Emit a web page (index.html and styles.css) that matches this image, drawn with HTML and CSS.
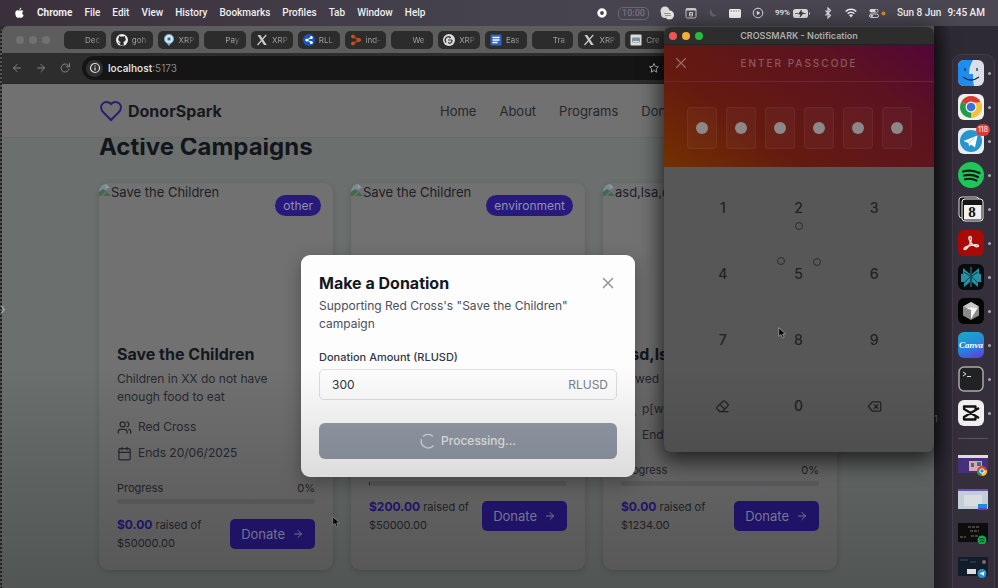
FILE: index.html
```html
<!DOCTYPE html>
<html lang="en">
<head>
<meta charset="utf-8">
<meta name="viewport" content="width=device-width, initial-scale=1">
<title>DonorSpark</title>
<link rel="stylesheet" href="styles.css">
</head>
<body>
<svg class="defs" aria-hidden="true">
  <defs>
    <symbol id="arrow" viewBox="0 0 24 24"><path d="M5 12h14M12 5l7 7-7 7"/></symbol>
    <symbol id="close" viewBox="0 0 24 24"><path d="M18 6L6 18M6 6l12 12"/></symbol>
    <symbol id="users" viewBox="0 0 24 24"><path d="M16 21v-2a4 4 0 0 0-4-4H6a4 4 0 0 0-4 4v2M22 21v-2a4 4 0 0 0-3-3.87M16 3.13a4 4 0 0 1 0 7.75"/><circle cx="9" cy="7" r="4"/></symbol>
    <symbol id="calendar" viewBox="0 0 24 24"><rect x="3" y="4" width="18" height="18" rx="2"/><path d="M16 2v4M8 2v4M3 10h18"/></symbol>
    <symbol id="broken" viewBox="0 0 12 12"><path fill="#7d8a96" d="M0 0h7l2 2v3L0 10z"/><path fill="#8f9ba6" d="M7 0l4 4H7z"/><path fill="#3f6b4c" d="M0 12V8l4-3 3 2-5 5zM4 12l4-4 4 4z"/></symbol>
    <symbol id="cursor" viewBox="0 0 12 16"><path d="M1 1v11.5l3-2.6 2 4.6 2.2-1-2-4.3H10z" fill="#000" stroke="#aaa" stroke-width="1"/></symbol>
    <symbol id="x-logo" viewBox="0 0 24 24"><path d="M3 2h5.500L21.500 22H16z" fill="#ccc"/><path d="M20.500 2l-8 9M3 22l8-9" fill="none" stroke="#ccc" stroke-width="2.400"/></symbol>
  </defs>
</svg>

<div class="desktop">
  <header class="menubar">
    <nav class="menus" aria-label="Menu bar">
      <svg class="apple" viewBox="0 0 24 24"><path fill="#fff" d="M12 6.8C10.800 6.600 9.500 5.800 7.900 5.800 5 5.800 2.800 8.200 2.800 12.300c0 4.700 3 10.200 5.900 10.200 1.200 0 2-.8 3.500-.8s2.200.8 3.500.8c2.300 0 4.300-3.200 5.200-5.800-3.700-1.700-4-6.900-.4-8.800-1.100-1.500-2.700-2.200-4.300-2.100-1.600 0-2.800.9-4.200 1zM15.800.5c.3 2.500-1.700 4.900-4 4.900-.3-2.400 1.800-4.800 4-4.900z"/></svg>
      <b>Chrome</b><span>File</span><span>Edit</span><span>View</span><span>History</span><span>Bookmarks</span><span>Profiles</span><span>Tab</span><span>Window</span><span>Help</span>
    </nav>
    <div class="status">
      <svg class="s10" viewBox="0 0 10 10"><circle cx="5" cy="5" r="3.300" fill="none" stroke="#fff" stroke-width="2.800"/></svg>
      <span class="timer">10:00</span>
      <svg class="s14" viewBox="0 0 14 14"><circle cx="5" cy="5" r="4.500" fill="#ddd"/><circle cx="9.500" cy="9" r="4.500" fill="#eee"/><circle cx="5" cy="8" r="4" fill="#ddd"/><path d="M4 7.500h7M5 9.500h6" stroke="#999" stroke-width="1"/></svg>
      <svg class="s12" viewBox="0 0 12 12"><rect x="1" y="1.500" width="10" height="9.500" rx="1.500" fill="none" stroke="#ccc"/><path d="M1 2.500h10" stroke="#ccc" stroke-width="2"/><path d="M4.500 5.500h3v3.500h-3zM4.500 7.200h3" stroke="#ccc" fill="none"/></svg>
      <svg class="s10" viewBox="0 0 10 10"><path d="M3.500 1a4 4 0 1 0 5.500 5.500A4.500 4.500 0 0 1 3.500 1z" fill="#67626e"/></svg>
      <svg class="s12" viewBox="0 0 12 12"><rect y="2" width="12" height="9" rx="1.500" fill="#f3f3f3"/><path d="M1.500 4h9" stroke="#777" stroke-dasharray="1.500 1"/></svg>
      <svg class="s12" viewBox="0 0 12 12"><circle cx="6" cy="6" r="4.800" fill="none" stroke="#ddd"/><path d="M4.800 3.800L8.300 6 4.800 8.200z" fill="#ddd"/></svg>
      <span class="power">99%<svg class="battery" viewBox="0 0 18 9"><rect x="0" y="0" width="15" height="9" rx="2.500" fill="#ddd"/><path d="M16 3v3q2-1.500 0-3z" fill="#ddd"/><path d="M2 4.500h3M10 4.500h3M8.500 1L5.500 5h2.500l-1 3 3.500-4.200H8z" fill="#333" stroke="#333" stroke-width=".7"/></svg></span>
      <svg class="s12" viewBox="0 0 12 12"><path d="M3.500 3.500l5 5L6 11V1l2.500 2.500-5 5" fill="none" stroke="#ddd" stroke-width="1.200"/></svg>
      <svg class="s12" viewBox="0 0 12 12"><path d="M.7 4.500a7.500 7.500 0 0 1 10.600 0M2.600 6.600a4.800 4.800 0 0 1 6.800 0" fill="none" stroke="#eee" stroke-width="1.500"/><path d="M4 8.300a2.900 2.900 0 0 1 4 0L6 10.400z" fill="#eee"/></svg>
      <svg class="control" viewBox="0 0 18 12"><rect x="1.500" y="2" width="9" height="3.500" rx="1.700" fill="#ddd"/><circle cx="8.500" cy="3.700" r="1.200" fill="#444"/><rect x="1.500" y="7" width="9" height="3.500" rx="1.700" fill="none" stroke="#ddd"/><circle cx="3.800" cy="8.700" r="1.300" fill="#ddd"/><circle cx="15.500" cy="6.500" r="2" fill="#d98a1d"/></svg>
      <span class="clock"><span>Sun 8 Jun</span><span>9:45 AM</span></span>
    </div>
  </header>

  <div class="stage">
    <section class="browser">
      <div class="tabs">
        <div class="lights"><i></i><i></i><i></i></div>
        <div class="tablist">
          <div class="tab"><span class="fav"></span><span>Dec</span></div>
          <div class="tab"><svg class="fav" viewBox="0 0 24 24"><circle cx="12" cy="12" r="12" fill="#eee"/><path d="M8.500 23v-4c-3 .5-3.600-1.500-4.500-2.500 2 0 2.500 1.800 4.500 1.200.1-.9.500-1.400.9-1.800-3-.4-4.900-1.900-4.900-5.200 0-1.500.5-2.500 1.400-3.400-.3-1-.2-2 .2-3.200 1.300 0 2.300.7 3.200 1.300a11 11 0 0 1 5.400 0c.9-.6 1.900-1.300 3.200-1.300.4 1.200.5 2.200.2 3.200.9.900 1.400 1.900 1.400 3.400 0 3.300-1.900 4.800-4.900 5.200.6.500.9 1.400.9 2.600V23z" fill="#2a2a2a"/></svg><span>goh</span></div>
          <div class="tab"><svg class="fav" viewBox="0 0 12 12"><path d="M6 0a5 5 0 0 1 5 5c0 3-3 4-5 7C4 9 1 8 1 5a5 5 0 0 1 5-5z" fill="#7fb0da"/><circle cx="6" cy="5" r="3" fill="none" stroke="#e8f1f8" stroke-width="1.500"/><circle cx="6" cy="5" r="1" fill="#1d4f80"/></svg><span>XRP</span></div>
          <div class="tab"><span class="fav"></span><span>Pay</span></div>
          <div class="tab"><svg class="fav"><use href="#x-logo"/></svg><span>XRP</span></div>
          <div class="tab"><svg class="fav" viewBox="0 0 12 12"><circle cx="6" cy="6" r="6" fill="#1556c4"/><path d="M8.500 3.500L4 6l4.500 2.500" fill="none" stroke="#fff"/><circle cx="8.300" cy="3.600" r="1.500" fill="#fff"/><circle cx="3.800" cy="6" r="1.500" fill="#fff"/><circle cx="8.300" cy="8.400" r="1.500" fill="#fff"/></svg><span>RLL</span></div>
          <div class="tab"><svg class="fav" viewBox="0 0 12 12"><path d="M3 2.500L9 6 3 9.500" fill="none" stroke="#a8441c" stroke-width="1.800"/><circle cx="3" cy="2.500" r="1.900" fill="#c4501f"/><circle cx="9" cy="6" r="2.100" fill="#c4501f"/><circle cx="3" cy="9.500" r="1.900" fill="#c4501f"/></svg><span>ind-</span></div>
          <div class="tab"><span class="fav"></span><span>We</span></div>
          <div class="tab"><svg class="fav" viewBox="0 0 12 12"><circle cx="6" cy="6" r="6" fill="#ddd"/><path d="M3 8.500a3.500 3.500 0 0 1 4-5.500M5 6h4M5 8.500a2.500 2.500 0 0 0 4-2.500M6 4l2-1" fill="none" stroke="#333" stroke-width="1.200"/></svg><span>XRP</span></div>
          <div class="tab"><svg class="fav" viewBox="0 0 12 12"><rect x=".5" y=".5" width="11" height="11" rx="1" fill="#2f62c4"/><path d="M2.500 3.500h7M2.500 6h7M2.500 8.500h5" stroke="#fff" stroke-width="1.300"/></svg><span>Eas</span></div>
          <div class="tab"><span class="fav"></span><span>Tra</span></div>
          <div class="tab"><svg class="fav"><use href="#x-logo"/></svg><span>XRP</span></div>
          <div class="tab"><svg class="fav" viewBox="0 0 12 12"><rect x=".5" y=".5" width="11" height="11" rx="1" fill="#ddd"/><rect x="2" y="3.500" width="8" height="5" rx="1" fill="#7b93a5"/><path d="M3 7.500h6" stroke="#ddd"/></svg><span>Cre</span></div>
        </div>
      </div>
      <div class="toolbar">
        <button class="tool" aria-label="Back"><svg class="line flip"><use href="#arrow"/></svg></button>
        <button class="tool" aria-label="Forward"><svg class="line"><use href="#arrow"/></svg></button>
        <button class="tool" aria-label="Reload"><svg class="line" viewBox="0 0 24 24"><path d="M20 14a8 8 0 1 1-2-7.500l2.500 2.500M21 3v6.500h-6.500"/></svg></button>
        <div class="omnibox">
          <span class="site"><svg viewBox="0 0 12 12"><circle cx="6" cy="6" r="4.500" fill="none" stroke="#ddd" stroke-width="1.200"/><path d="M6 3.500v1M6 5.500V8.500" stroke="#ddd" stroke-width="1.200"/></svg></span>
          <span class="url"><b>localhost</b>:5173</span>
          <svg class="star" viewBox="0 0 24 24"><path d="M12 3l2.700 6 6.300.6-4.800 4.300 1.500 6.500L12 17l-5.700 3.400 1.500-6.500L3 9.600 9.300 9z" fill="none" stroke="#bbb" stroke-width="2"/></svg>
        </div>
      </div>

      <div class="page">
        <header class="site-header">
          <div class="brand"><svg viewBox="0 0 24 24"><path d="M19 14c1.500-1.500 3-3.200 3-5.500A5.500 5.500 0 0 0 16.500 3c-1.800 0-3 .5-4.500 2-1.500-1.500-2.700-2-4.500-2A5.500 5.500 0 0 0 2 8.500c0 2.300 1.500 4 3 5.500l7 7z"/></svg>DonorSpark</div>
          <nav class="links"><a href="#">Home</a><a href="#">About</a><a href="#">Programs</a><a href="#">Donate</a></nav>
        </header>
        <main class="content">
          <h1>Active Campaigns</h1>
          <div class="cards">
            <article class="card">
              <div class="media"><svg><use href="#broken"/></svg><span>Save the Children</span><span class="badge">other</span></div>
              <div class="body">
                <h2>Save the Children</h2>
                <p class="desc">Children in XX do not have enough food to eat</p>
                <p class="meta"><svg class="line"><use href="#users"/></svg>Red Cross</p>
                <p class="meta"><svg class="line"><use href="#calendar"/></svg>Ends 20/06/2025</p>
                <div class="progress"><span>Progress</span><span>0%</span></div>
                <div class="bar"></div>
                <div class="fund"><div><p><b>$0.00</b> raised of</p><p>$50000.00</p></div><button class="donate">Donate <svg class="line"><use href="#arrow"/></svg></button></div>
              </div>
            </article>
            <article class="card">
              <div class="media"><svg><use href="#broken"/></svg><span>Save the Children</span><span class="badge">environment</span></div>
              <div class="body">
                <h2>Save the Children</h2>
                <p class="desc">Save the Children</p>
                <p class="meta"><svg class="line"><use href="#users"/></svg>Red Cross</p>
                <p class="meta"><svg class="line"><use href="#calendar"/></svg>Ends 20/06/2025</p>
                <div class="progress"><span>Progress</span><span>0%</span></div>
                <div class="bar started"></div>
                <div class="fund"><div><p><b>$200.00</b> raised of</p><p>$50000.00</p></div><button class="donate">Donate <svg class="line"><use href="#arrow"/></svg></button></div>
              </div>
            </article>
            <article class="card">
              <div class="media"><svg><use href="#broken"/></svg><span>asd,lsa,d</span></div>
              <div class="body">
                <h2>asd,lsa</h2>
                <p class="desc">qywed</p>
                <p class="meta"><svg class="line"><use href="#users"/></svg>p[wd</p>
                <p class="meta"><svg class="line"><use href="#calendar"/></svg>Ends</p>
                <div class="progress"><span>Progress</span><span>0%</span></div>
                <div class="bar"></div>
                <div class="fund"><div><p><b>$0.00</b> raised of</p><p>$1234.00</p></div><button class="donate">Donate <svg class="line"><use href="#arrow"/></svg></button></div>
              </div>
            </article>
          </div>
        </main>

        <div class="overlay">
          <form class="modal">
            <div class="modal-head"><h2>Make a Donation</h2><button type="button" class="x" aria-label="Close"><svg class="line"><use href="#close"/></svg></button></div>
            <p class="sub">Supporting Red Cross's "Save the Children" campaign</p>
            <label for="amount">Donation Amount (RLUSD)</label>
            <div class="field"><input id="amount" type="text" value="300"><span>RLUSD</span></div>
            <button type="button" class="processing"><svg viewBox="0 0 16 16"><path d="M3 3.500a7 7 0 0 1 10 0M1.500 6a7 7 0 0 0 12 6.500" fill="none" stroke="#d5d8dc" stroke-width="1.400"/></svg>Processing...</button>
          </form>
        </div>
        <svg class="pointer page-pointer"><use href="#cursor"/></svg>
      </div>
    </section>

    <section class="popup">
      <div class="titlebar"><div class="lights"><i></i><i></i><i></i></div>CROSSMARK - Notification</div>
      <div class="hero">
        <div class="hero-head"><button aria-label="Cancel"><svg class="line"><use href="#close"/></svg></button><span>ENTER PASSCODE</span></div>
        <div class="code"><i></i><i></i><i></i><i></i><i></i><i></i></div>
      </div>
      <div class="keys">
        <button>1</button><button>2</button><button>3</button>
        <button>4</button><button>5</button><button>6</button>
        <button>7</button><button>8</button><button>9</button>
        <button aria-label="Clear"><svg class="line" viewBox="0 0 24 24"><path d="M8 20l-5-4.500a2 2 0 0 1 0-2.500L13 3.500a2 2 0 0 1 3 0l4.500 4.500a2 2 0 0 1 0 3L12 20zM8 9l7.500 7M7 20h14"/></svg></button><button>0</button><button aria-label="Delete"><svg class="line" viewBox="0 0 24 24"><path d="M8.500 4.500H20a2 2 0 0 1 2 2v11a2 2 0 0 1-2 2H8.500L2 12zM11.500 9l6 6M17.500 9l-6 6"/></svg></button>
        <svg class="spinner" viewBox="0 0 46 46"><g fill="none" stroke="#2d2d2d"><circle cx="23" cy="5" r="3.500"/><circle cx="5" cy="40" r="3.500"/><circle cx="41" cy="41" r="3.500"/></g></svg>
        <svg class="pointer"><use href="#cursor"/></svg>
      </div>
    </section>

    <div class="gutter"><span>1</span></div>
    <aside class="dock">
      <div class="app"><svg viewBox="0 0 26 26"><rect width="26" height="26" rx="6" fill="#d9dfe8"/><path d="M6 0h9c-3 5-4 9-4 14h4c0 5 0 8 1 12H6a6 6 0 0 1-6-6V6a6 6 0 0 1 6-6z" fill="#1f8cf0"/><path d="M7 8v3M19 8v3M5 17q8 6 16 0" fill="none" stroke="#16324f" stroke-width="1.300"/></svg></div>
      <div class="app"><svg viewBox="0 0 26 26"><rect width="26" height="26" rx="6" fill="#f0f0f0"/><path d="M13 13L3.500 7.500A11 11 0 0 1 22.500 7.500z" fill="#d93a2d"/><path d="M13 13L22.500 7.500A11 11 0 0 1 13 24z" fill="#f5c33b"/><path d="M13 13v11A11 11 0 0 1 3.500 7.500z" fill="#269a4c"/><path d="M13 8.500h9.800a11 11 0 0 1-9.800 15.500l4-9z" fill="#f5c33b"/><circle cx="13" cy="13" r="5.500" fill="#f4f4f4"/><circle cx="13" cy="13" r="4.300" fill="#3474dd"/></svg></div>
      <div class="app"><svg viewBox="0 0 26 26"><rect width="26" height="26" rx="6" fill="#e9eef2"/><circle cx="13" cy="13" r="11" fill="#2596cf"/><path d="M5.500 13L19.500 7.500 17 19.500l-4-3-2 2-.5-3.500z" fill="#fff"/><path d="M10.500 15l6-5" stroke="#9cc9e3"/></svg><span class="count">118</span></div>
      <div class="app"><svg viewBox="0 0 26 26"><circle cx="13" cy="13" r="13" fill="#1fc75a"/><path d="M5 9.500q8.500-2.500 16.500 1.500M6 13.500q7.500-2 14 1.500M7 17.300q6-1.500 11.500 1.200" fill="none" stroke="#101a13" stroke-width="2.200" stroke-linecap="round"/></svg></div>
      <div class="app cal"><svg viewBox="0 0 26 26"><rect x="1" y="1" width="20" height="21" rx="3" fill="#151515" stroke="#ddd"/><rect x="4" y="3" width="21" height="22" rx="3" fill="#151515" stroke="#eee"/><path d="M6 9h17.500v14.500H6z" fill="#f2f2f2"/></svg><b>8</b></div>
      <div class="app"><svg viewBox="0 0 26 26"><rect width="26" height="26" rx="6" fill="#a90a06"/><path d="M12 6.500c2 0 1.500 3.500.5 6-1.300 3.300-4 7-5.700 7-1.500 0-.8-2 2-3 3-1.200 7-2 9.700-1.800 2.500.2 2.500 2 .5 2-3 0-7.500-4.500-8-8-.3-1.500.2-2.200 1-2.200z" fill="none" stroke="#f1dcdc" stroke-width="1.500"/></svg></div>
      <div class="app"><svg viewBox="0 0 26 26"><rect width="26" height="26" rx="6" fill="#070b0d"/><path d="M12 10L5 4v6H3v8h3v5l6-5zM14 10l7-6v6h2v8h-3v5l-6-5z" fill="#2591a5"/><path d="M13 3v20" stroke="#2591a5"/><path d="M12 12L6 8M14 12l6-4M12 13l-6 6M14 13l6 6" stroke="#0b3640"/></svg></div>
      <div class="app"><svg viewBox="0 0 26 26"><rect width="26" height="26" rx="6" fill="#060606"/><path d="M13 4l8 4.500v9L13 22l-8-4.500v-9z" fill="#8a8a8a"/><path d="M5 8.500L13 4l8 4.500-8 1.500z" fill="#c9c9c9"/><path d="M7 9.500h13L13 21v-9z" fill="#f4f4f4"/></svg></div>
      <div class="app canva"><span>Canva</span></div>
      <div class="app"><svg viewBox="0 0 26 26"><rect x="1" y="1" width="24" height="24" rx="5" fill="#202224" stroke="#aaa" stroke-width="1.500"/><path d="M5 6l3 2-3 2M9 10.500h4" fill="none" stroke="#ddd"/></svg></div>
      <div class="app"><svg viewBox="0 0 26 26"><rect width="26" height="26" rx="6" fill="#f0f0f0"/><path d="M21 8L6 17v2.500h11.500V17M21 18L6 9V6.500h11.500V9" fill="none" stroke="#111" stroke-width="2.300" stroke-linejoin="round"/></svg></div>
      <hr>
      <svg class="thumb" viewBox="0 0 30 21"><path fill="#46307a" d="M0 0h30v18H0z"/><path fill="#ddd" d="M0 0h30v3H0z"/><path fill="#d9a6b2" d="M11 6h13v10H11z"/><path d="M13 8h3v4h-3zM19 7h4v4h-4z" fill="#377"/><circle cx="24" cy="16" r="5" fill="#d9432f"/><path d="M24 16l5-1a5 5 0 0 1-5 6z" fill="#f3c33c"/><path d="M24 16v5a5 5 0 0 1-5-6z" fill="#2b9c4e"/><circle cx="24" cy="16" r="2.200" fill="#3a78dd" stroke="#fff"/></svg>
      <svg class="thumb" viewBox="0 0 30 21"><path fill="#c3ced8" d="M0 0h30v20H0z"/><path fill="#6b51b5" d="M0 0h30v2H0z"/><rect x="6" y="6" width="18" height="11" fill="#d9dce0"/><path d="M20 15h9v6h-9z" fill="#1b8ed0"/><path d="M20 19h9v2h-9z" fill="#5b3fd0"/></svg>
      <svg class="thumb" viewBox="0 0 30 21"><path fill="#0c0d0e" d="M0 0h30v19H0z"/><path d="M10 4h12M12 8h9M2 14h6M13 13h8" stroke="#4b4037" stroke-width="2" stroke-dasharray="3 1"/><circle cx="24" cy="17" r="4.500" fill="#14a64a"/><path d="M21.500 16q3-1 5 .5M22 18.500q2-1 4 .3" stroke="#0b331a" fill="none"/></svg>
      <svg class="thumb" viewBox="0 0 30 21"><path fill="#121d2b" d="M0 0h30v19H0z"/><path d="M2 3h8M12 5h6" stroke="#32506a"/><path d="M9 12h9v5H9z" fill="#ddd"/><circle cx="26" cy="5" r="2" fill="#7b6b62"/><circle cx="24" cy="16.500" r="4.500" fill="#2b92c9"/><path d="M21.500 16.500l5-2-1 4.500-1.500-1.500z" fill="#fff"/></svg>
      <svg class="thumb" viewBox="0 0 30 21"><circle cx="13" cy="9" r="10" fill="#a19da6"/></svg>
    </aside>
    <div class="shade"></div>
    <span class="handle">›</span>
  </div>
</div>
</body>
</html>
```
FILE: styles.css
```css
* { box-sizing: border-box; margin: 0; padding: 0; }
body { height: 100vh; overflow: hidden; background: #2e2a33; font-family: Inter, "Open Sans", sans-serif; font-size: 13px; line-height: 18px; color: #1d2026; }
button, input { font: inherit; color: inherit; border: 0; background: none; }
a { color: inherit; text-decoration: none; }
i { display: block; }
.defs { position: absolute; width: 0; height: 0; }
.line { fill: none; stroke: currentColor; stroke-width: 2; stroke-linecap: round; stroke-linejoin: round; }
.desktop { display: flex; flex-direction: column; height: 100vh; }

/* System menu bar */
.menubar { flex: none; height: 26px; display: flex; justify-content: space-between; align-items: center; padding: 0 13px 0 14px; background: linear-gradient(90deg, #3a303c, #46434e 50%, #4a4652); color: #eee; font-family: Roboto, Inter, sans-serif; font-size: 10px; font-weight: 500; }
.menus, .status, .clock, .power { display: flex; align-items: center; }
.menus { gap: 12px; }
.apple { width: 11px; height: 12px; }
.status { gap: 11px; }
.timer { border: 1px solid #6b6672; border-radius: 5px; padding: 0 3px; line-height: 11px; font-size: 9px; color: #77727e; }
.s10 { width: 10px; height: 10px; }
.s12 { width: 12px; height: 12px; }
.s14 { width: 14px; height: 14px; }
.power { gap: 3px; font-size: 8px; }
.battery { width: 18px; height: 9px; }
.control { width: 18px; height: 12px; }
.clock { gap: 6px; white-space: nowrap; }

.stage { position: relative; flex: 1; min-height: 0; display: flex; }

/* Browser window */
.browser { flex: 1; min-width: 0; display: flex; flex-direction: column; border-left: 2px dotted #222; border-radius: 8px 0 0 0; overflow: hidden; background: #555; }
.tabs { flex: none; height: 27px; display: flex; align-items: center; padding: 0 267px 0 14px; background: #5d5d5d; }
.lights { display: flex; gap: 5px; }
.lights i { width: 8px; height: 8px; border-radius: 50%; background: #717171; }
.tablist { flex: 1; min-width: 0; margin-left: 14px; display: grid; grid-template-columns: repeat(13, 1fr); gap: 5px; }
.tab { display: flex; align-items: center; gap: 4px; height: 18px; padding: 0 5px; border-radius: 5px; background: #2c2c2c; font-size: 8px; color: #a0a0a0; }
.tab span:last-child { flex: 1; min-width: 0; mask-image: linear-gradient(90deg, #000 50%, rgba(0, 0, 0, .3)); }
.fav { flex: none; width: 12px; height: 12px; }
.toolbar { flex: none; height: 31px; display: flex; align-items: center; gap: 10px; padding-left: 8px; background: #2d2d2d; border-bottom: 1px solid #262626; }
.tool { width: 14px; height: 14px; color: #858585; }
.tool svg { display: block; width: 12px; height: 12px; margin: 1px; }
.flip { transform: scaleX(-1); }
.omnibox { flex: 1; height: 24px; display: flex; align-items: center; gap: 5px; padding: 0 274px 0 4px; border-radius: 12px; background: #151515; font-size: 10px; color: #8a8a8a; }
.site { width: 17px; height: 17px; display: grid; place-items: center; border-radius: 50%; background: #303030; }
.site svg { width: 12px; height: 12px; }
.url { flex: 1; }
.url b { font-weight: 600; color: #ddd; }
.star { width: 12px; height: 12px; }

/* Page */
.page { position: relative; flex: 1; min-height: 0; overflow: hidden; background: #6b706e; }
.site-header { position: relative; z-index: 1; height: 54px; display: grid; grid-template-columns: 341px auto; align-items: center; padding: 0 97px; background: #717171; border-bottom: 1px solid #696969; }
.brand { display: flex; align-items: center; gap: 5px; font-size: 16px; font-weight: 700; color: #17191f; }
.brand svg { width: 24px; height: 24px; fill: none; stroke: #2c1c73; stroke-width: 2; }
.links { display: flex; gap: 23px; color: #24272c; }
.content { padding: 0 97px; }
h1 { font-size: 24px; line-height: 18px; color: #12161c; margin-bottom: 27px; }
.cards { display: grid; grid-template-columns: repeat(3, 1fr); gap: 18px; }
.card { border-radius: 9px; background: #717171; box-shadow: 0 2px 6px rgba(0, 0, 0, .16); overflow: hidden; }
.media { position: relative; height: 142px; display: flex; }
.media svg { width: 12px; height: 12px; margin-top: 1px; }
.badge { position: absolute; top: 12px; right: 12px; padding: 0 8px; line-height: 21px; border-radius: 11px; background: #281a7c; color: #918ebd; font-size: 12px; }
.body { padding: 16px 18px 18px; }
.body h2 { font-size: 16px; line-height: 26px; margin-bottom: 3px; color: #14171c; }
.desc, .meta { font-size: 12px; color: #262a30; }
.desc { margin-bottom: 12px; padding-right: 24px; }
.meta { display: flex; align-items: center; gap: 6px; margin-bottom: 8px; }
.meta svg { width: 15px; height: 15px; }
.progress { display: flex; justify-content: space-between; margin-top: 16px; font-size: 11px; line-height: 20px; color: #24272c; }
.bar { height: 5px; margin: 1px 0 12px; border-radius: 3px; background: #646668; }
.started { background: linear-gradient(90deg, #281a7c 1px, #646668 1px); }
.fund { display: flex; justify-content: space-between; align-items: center; }
.fund p { font-size: 11px; color: #24272c; white-space: nowrap; }
.fund b { font-size: 12px; color: #25177c; }
.donate { flex: none; display: flex; align-items: center; gap: 7px; height: 30px; padding: 0 11px; border-radius: 5px; background: #25177c; color: #908dae; }
.donate svg { width: 12px; height: 12px; }

/* Donation dialog */
.overlay { position: absolute; z-index: 2; inset: 0; padding-top: 171px; display: flex; justify-content: center; align-items: flex-start; }
.modal { width: 100%; max-width: 334px; padding: 18px; border-radius: 9px; background: #fdfdfd; box-shadow: 0 6px 18px rgba(0, 0, 0, .3); display: flex; flex-direction: column; }
.modal-head { display: flex; justify-content: space-between; align-items: center; margin-bottom: 4px; }
.modal h2 { font-size: 16px; line-height: 20px; color: #14171f; }
.x { width: 18px; height: 18px; color: #909399; }
.x svg { display: block; width: 18px; height: 18px; }
.sub { font-size: 12px; color: #4b5059; margin-bottom: 15px; }
.modal label { font-size: 11px; font-weight: 500; color: #333844; margin-bottom: 3px; }
.field { display: flex; align-items: center; height: 31px; border: 1px solid #ddd; border-radius: 5px; padding: 0 8px 0 12px; color: #7a7f88; font-size: 12px; }
.field input { flex: 1; min-width: 0; color: #30343b; outline: 0; }
.processing { display: flex; align-items: center; justify-content: center; gap: 5px; height: 36px; margin-top: 23px; border-radius: 6px; background: #949ba7; color: #e6e8eb; font-size: 12px; font-weight: 500; }
.processing svg { width: 16px; height: 16px; }
.pointer { width: 9px; height: 12px; }
.page-pointer { position: absolute; left: 330px; top: 432px; z-index: 3; }

/* Wallet window floating above the browser */
.popup { position: absolute; top: 1px; right: 64px; z-index: 4; width: 270px; display: flex; flex-direction: column; border-radius: 7px; overflow: hidden; background: #575757; box-shadow: 0 6px 22px 3px rgba(0, 0, 0, .7); }
.titlebar { position: relative; height: 18px; line-height: 18px; text-align: center; background: #2d2d2d; border-bottom: 1px solid #222; color: #aaa; font-size: 9px; font-weight: 600; }
.titlebar .lights { position: absolute; left: 5px; top: 5px; }
.titlebar i:nth-child(1) { background: #f0564f; }
.titlebar i:nth-child(2) { background: #f3af33; }
.titlebar i:nth-child(3) { background: #2bba3d; }
.hero { height: 122px; background: linear-gradient(35deg, #743000 0%, #651a10 32%, #5c1320 72%, #540538 100%); }
.hero-head { display: grid; grid-template-columns: 34px 1fr 34px; align-items: center; height: 37px; border-bottom: 1px solid #702331; color: #8f5960; font-size: 10px; font-weight: 500; letter-spacing: 2px; text-align: center; }
.hero-head svg { display: block; width: 18px; height: 18px; margin: auto; color: #986c6c; stroke-width: 1.5; }
.code { display: flex; justify-content: center; gap: 9px; padding-top: 25px; }
.code i { display: grid; place-items: center; width: 30px; height: 42px; border-radius: 4px; border: 1px solid rgba(255, 255, 255, .05); background: rgba(255, 255, 255, .03); }
.code i::after { content: ""; width: 12px; height: 12px; border-radius: 50%; background: #8d8888; }
.keys { position: relative; display: grid; grid-template-columns: repeat(3, 1fr); grid-auto-rows: 66px; padding: 8px 22px 13px 21px; font-size: 14px; font-weight: 500; color: #222; }
.keys .line { width: 15px; height: 15px; }
.keys button { display: grid; place-items: center; }
.spinner { position: absolute; left: 112px; top: 54px; width: 46px; height: 46px; }
.keys .pointer { position: absolute; left: 114px; top: 160px; }

/* Dock */
.gutter { position: relative; flex: none; width: 18px; background: linear-gradient(90deg, #211e25, #302b36); color: #777; font-size: 9px; }
.gutter span { position: absolute; left: 0; top: 384px; }
.dock { flex: none; width: 43px; margin: 28px 3px 0 0; padding: 5px 0 0 5px; display: flex; flex-direction: column; gap: 8px; border: 1px solid #423b49; border-bottom: 0; border-radius: 9px 9px 0 0; background: #352e3b; overflow: hidden; }
.app { position: relative; flex: none; width: 26px; height: 26px; }
.app svg { display: block; width: 26px; height: 26px; }
.app::after { content: ""; position: absolute; right: -7px; top: 12px; width: 3px; height: 3px; border-radius: 50%; background: #aaa6ad; }
.count { position: absolute; right: -6px; top: -4px; width: 14px; height: 12px; border-radius: 6px; background: #dd3b35; color: #fff; font-size: 7px; line-height: 12px; text-align: center; }
.cal b { position: absolute; left: 5px; top: 8px; width: 18px; text-align: center; color: #111; font-family: "Liberation Serif", serif; font-size: 15px; line-height: 16px; }
.canva { display: grid; place-items: center; border-radius: 6px; background: linear-gradient(160deg, #15b0c4, #2a7de0 60%, #6a35dc); color: #fff; font-family: "Liberation Serif", serif; font-style: italic; font-size: 9px; font-weight: 700; }
.dock hr { flex: none; width: 30px; border: 0; border-top: 1px solid #5a5460; margin: 4px 0 8px; }
.thumb { flex: none; width: 30px; height: 21px; margin-bottom: 5px; }

.shade { position: absolute; z-index: 5; inset: 340px 64px 0 2px; background: linear-gradient(rgba(0, 0, 0, 0), rgba(0, 0, 0, .13) 50%, rgba(0, 0, 0, .24)); pointer-events: none; }
.handle { position: absolute; left: 0; top: 274px; z-index: 5; color: #aaa; font-size: 15px; }
```
